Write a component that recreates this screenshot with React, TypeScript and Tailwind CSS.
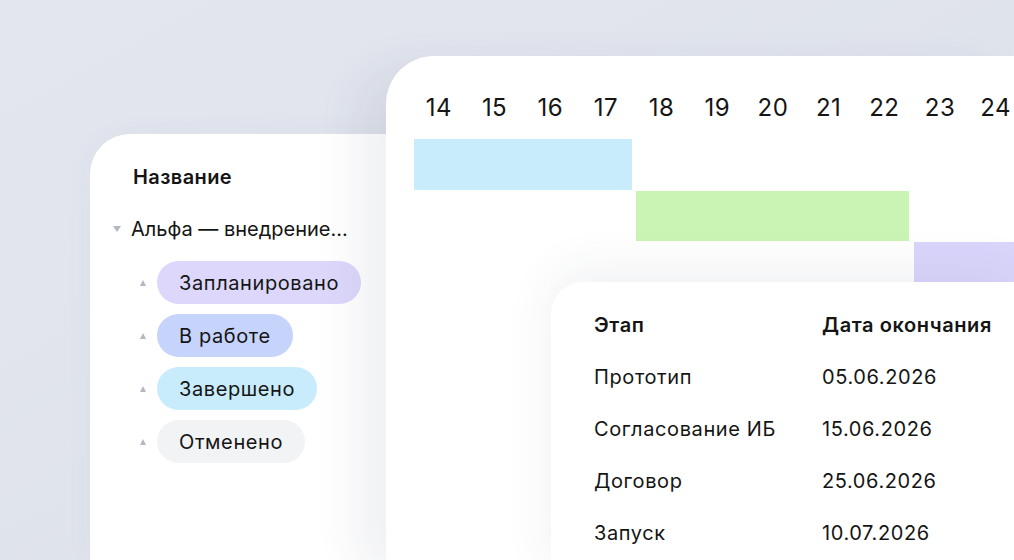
import React from "react";

const days = [14, 15, 16, 17, 18, 19, 20, 21, 22, 23, 24];

const statuses = [
  { label: "Запланировано", className: "bg-[#ddd8fb]" },
  { label: "В работе", className: "bg-[#c6d4fb]" },
  { label: "Завершено", className: "bg-[#c9ecfc]" },
  { label: "Отменено", className: "bg-[#f2f3f5]" },
];

const stages = [
  { name: "Прототип", date: "05.06.2026" },
  { name: "Согласование ИБ", date: "15.06.2026" },
  { name: "Договор", date: "25.06.2026" },
  { name: "Запуск", date: "10.07.2026" },
];

function Caret({ down }: { down?: boolean }) {
  return (
    <svg width="8" height="6" viewBox="0 0 8 6" className="shrink-0">
      <polygon points={down ? "0,0 8,0 4,6" : "0,6 8,6 4,0"} fill="#b3b8c1" />
    </svg>
  );
}

function TaskList() {
  return (
    <section className="col-start-1 row-start-1 ml-[90px] mt-[134px] w-[330px] justify-self-start rounded-tl-[40px] bg-white pt-[17px] shadow-[0_0_30px_rgba(60,70,110,0.04)]">
      <div className="flex h-[52px] items-center pl-[43px] text-[20px] font-semibold tracking-[0.02em]">Название</div>
      <div className="flex h-[52px] items-center gap-[10px] pl-[23px] text-[20px]">
        <Caret down />
        <span>Альфа — внедрение...</span>
      </div>
      <ul className="mt-[6px] flex flex-col gap-[10px]">
        {statuses.map((s) => (
          <li key={s.label} className="flex items-center pl-[49px]">
            <span className="mr-[10px] scale-x-75">
              <Caret />
            </span>
            <span className={`flex h-[43px] items-center rounded-full px-[22px] text-[20px] tracking-[0.03em] ${s.className}`}>
              {s.label}
            </span>
          </li>
        ))}
      </ul>
    </section>
  );
}

function Gantt() {
  return (
    <section className="col-start-1 row-start-1 ml-[386px] mt-[56px] overflow-hidden rounded-tl-[48px] bg-white shadow-[-30px_10px_44px_rgba(40,50,90,0.07)]">
      <div className="grid grid-cols-[repeat(11,55.7px)] pl-[25px] pt-[36px]">
        {days.map((d) => (
          <div key={d} className="h-[32px] text-center text-[24px] leading-[32px] tracking-[0.02em]">
            {d}
          </div>
        ))}
      </div>

      <div className="mt-[15px] grid grid-cols-[repeat(11,55.7px)] grid-rows-[repeat(3,51px)] pl-[25px]">
        <div className="col-span-4 col-start-1 row-start-1 ml-[3px] mr-[2px] bg-[#c9ecfc]" />
        <div className="col-span-5 col-start-5 row-start-2 ml-[2px] mr-[3px] mt-[1px] bg-[#c9f4b3]" />
        <div className="col-span-2 col-start-10 row-start-3 ml-[2px] mt-[1px] bg-[#dad5fb]" />
      </div>

      <div className="relative -mt-[10px] ml-[165px] h-[300px] rounded-tl-[32px] bg-white pl-[43px] pt-[17px] shadow-[0_-12px_50px_rgba(40,50,90,0.07)]">
        <div className="grid grid-cols-[228px_1fr] text-[20px] tracking-[0.03em]">
          <div className="flex h-[52px] items-center font-semibold">Этап</div>
          <div className="flex h-[52px] items-center font-semibold">Дата окончания</div>
          {stages.map((s) => (
            <React.Fragment key={s.name}>
              <div className="flex h-[52px] items-center">{s.name}</div>
              <div className="flex h-[52px] items-center">{s.date}</div>
            </React.Fragment>
          ))}
        </div>
      </div>
    </section>
  );
}

export default function App() {
  return (
    <div className="grid h-[560px] w-[1014px] overflow-hidden bg-gradient-to-br from-[#e3e6ef] to-[#dde1ea] font-['Inter','Noto_Sans',sans-serif] text-[#151515]">
      <TaskList />
      <Gantt />
    </div>
  );
}
